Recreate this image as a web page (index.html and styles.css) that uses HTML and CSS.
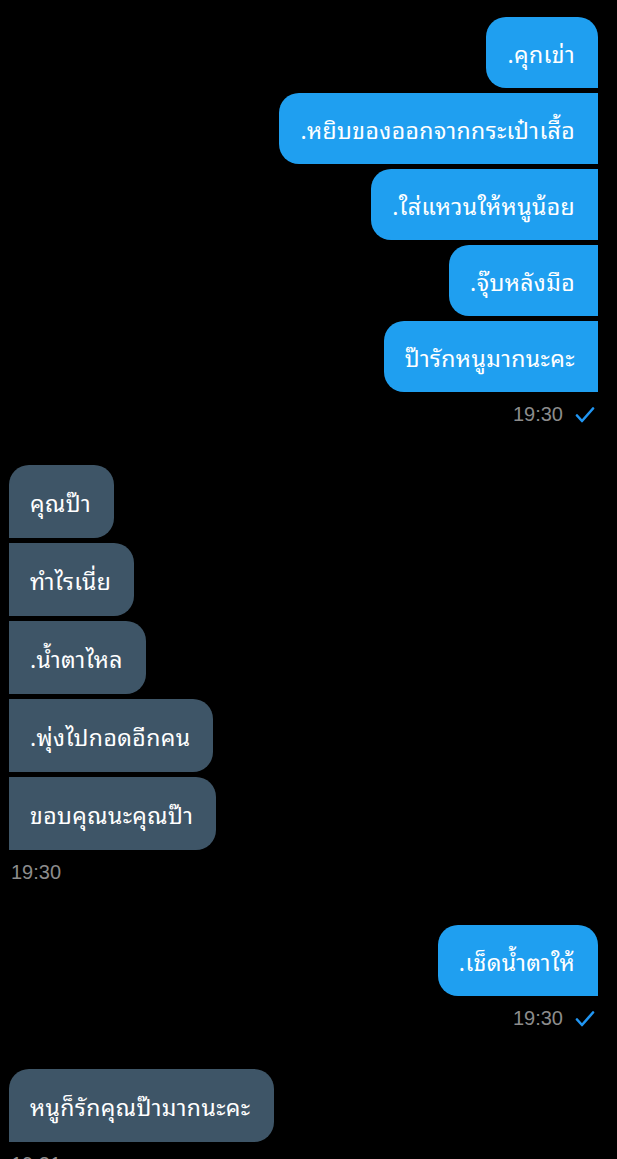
FILE: index.html
```html
<!DOCTYPE html>
<html lang="th">
<head>
  <meta charset="UTF-8" />
  <meta name="viewport" content="width=device-width, initial-scale=1.0"/>
  <title>Chat</title>
  <link rel="stylesheet" href="styles.css">
</head>
<body>
  <div class="chat">

    <div class="group out">
      <div class="bubble">.คุกเข่า</div>
      <div class="bubble">.หยิบของออกจากกระเป๋าเสื้อ</div>
      <div class="bubble">.ใส่แหวนให้หนูน้อย</div>
      <div class="bubble">.จุ๊บหลังมือ</div>
      <div class="bubble">ป๊ารักหนูมากนะคะ</div>
      <div class="meta">
        <span class="time">19:30</span>
        <svg class="tick" width="20" height="16" viewBox="0 0 20 16">
          <path d="M2 8.5 L7 14 L18 1.5" fill="none" stroke="#2196f3" stroke-width="2.6" stroke-linecap="round" stroke-linejoin="round"/>
        </svg>
      </div>
    </div>

    <div class="group in">
      <div class="bubble">คุณป๊า</div>
      <div class="bubble">ทำไรเนี่ย</div>
      <div class="bubble">.น้ำตาไหล</div>
      <div class="bubble">.พุ่งไปกอดอีกคน</div>
      <div class="bubble">ขอบคุณนะคุณป๊า</div>
      <div class="meta">
        <span class="time">19:30</span>
      </div>
    </div>

    <div class="group out">
      <div class="bubble">.เช็ดน้ำตาให้</div>
      <div class="meta">
        <span class="time">19:30</span>
        <svg class="tick" width="20" height="16" viewBox="0 0 20 16">
          <path d="M2 8.5 L7 14 L18 1.5" fill="none" stroke="#2196f3" stroke-width="2.6" stroke-linecap="round" stroke-linejoin="round"/>
        </svg>
      </div>
    </div>

    <div class="group in">
      <div class="bubble">หนูก็รักคุณป๊ามากนะคะ</div>
      <div class="meta">
        <span class="time">19:31</span>
      </div>
    </div>

  </div>
</body>
</html>
```

FILE: styles.css
```css
body {
  margin: 0;
  background-color: #000;
  font-family: "Noto Sans Thai Looped", "Noto Looped Thai UI", "Loma", "Garuda", "Noto Sans Thai", "Noto Sans", "DejaVu Sans", sans-serif;
}

.chat {
  padding: 17px 19px 0 9px;
}

.group {
  display: flex;
  flex-direction: column;
  gap: 5px;
  margin-bottom: 28px;
}

.group.out {
  align-items: flex-end;
}

.group.in {
  align-items: flex-start;
  margin-bottom: 30px;
}

.bubble {
  color: #fff;
  font-size: 23px;
  line-height: 31px;
  letter-spacing: 0.4px;
  padding: 20px 23px 20px 21px;
}

.out .bubble {
  background-color: #1f9ff0;
  border-radius: 20px 0 0 20px;
}

.out .bubble:first-child {
  border-top-right-radius: 20px;
}

.in .bubble {
  background-color: #3e5567;
  border-radius: 0 20px 20px 0;
  padding: 21px 23px 21px 21px;
}

.in .bubble:first-child {
  border-top-left-radius: 20px;
}

/* timestamp row under each group */
.meta {
  display: flex;
  align-items: center;
  gap: 12px;
  height: 45px;
  margin-top: -5px;
}

.time {
  color: #8c8c8c;
  font-family: "Liberation Sans", sans-serif;
  font-size: 20px;
}

.in .meta {
  padding-left: 2px;
}

.out .meta {
  padding-right: 3px;
}

.tick {
  display: block;
}
```
